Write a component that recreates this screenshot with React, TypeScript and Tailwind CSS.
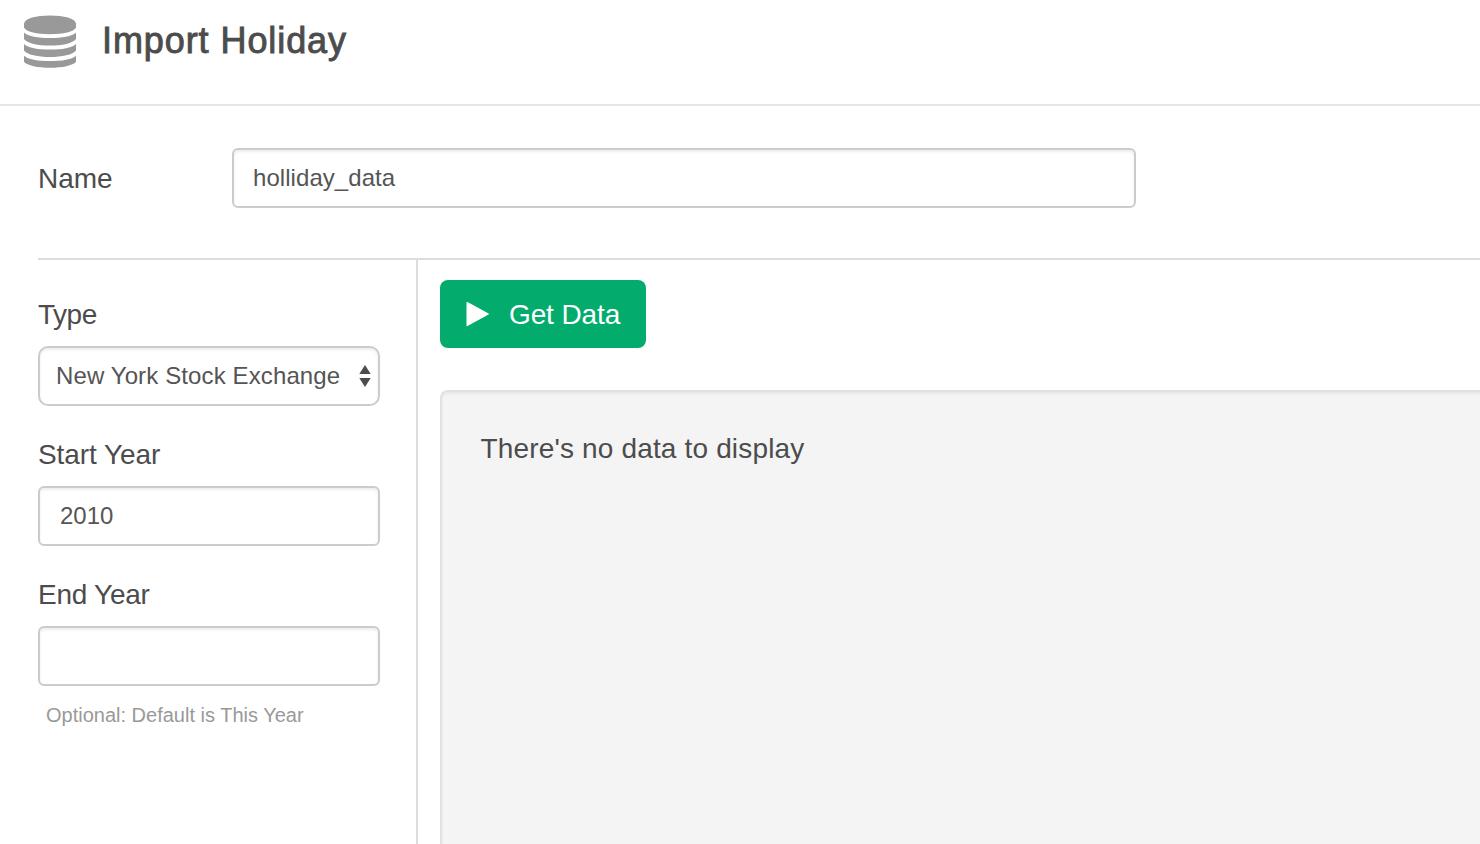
import { useState } from "react";
import type { ReactNode } from "react";

const inputClass =
  "block h-[60px] w-full rounded-[6px] border-2 border-[#cccccc] bg-white text-[24px] text-[#555555] shadow-[inset_0_2px_3px_rgba(0,0,0,0.075)] outline-none";

function DatabaseIcon() {
  return (
    <svg width="54" height="54" viewBox="0 0 54 54" fill="#999999" aria-hidden="true">
      <path d="M1 9.500C2 4.200 13 1.400 27 1.400s25 2.800 26 8.100v4C51 18 40 20.200 27 20.200S3 18 1 13.500z" />
      <path d="M1 18.500C5 22.500 15 24 27 24s22-1.500 26-5.500v6.500C50 29.300 39 31.600 27 31.600S4 29.300 1 25z" />
      <path d="M1 30C5 34 15 35.600 27 35.600s22-1.600 26-5.600v6.500C50 40.800 39 43 27 43S4 40.800 1 36.500z" />
      <path d="M1 41.700C5 45.500 15 47 27 47s22-1.500 26-5.300v6C50 51.600 39 53.700 27 53.700S4 51.600 1 47.700z" />
    </svg>
  );
}

function Field({ label, spacing, children }: { label: string; spacing: string; children: ReactNode }) {
  return (
    <div className="mb-7">
      <label className={`mb-[11px] block h-10 text-[28px] leading-10 whitespace-nowrap ${spacing}`}>{label}</label>
      {children}
    </div>
  );
}

export default function App() {
  const [name, setName] = useState("holliday_data");
  const [startYear, setStartYear] = useState("2010");
  const [endYear, setEndYear] = useState("");

  return (
    <div className="flex h-[844px] w-full flex-col overflow-hidden bg-white font-['Liberation_Sans',Arial,sans-serif] text-[#4c4c4c]">
      <header className="flex h-[106px] shrink-0 items-start border-b-2 border-[#e5e5e5] pt-[14px] pl-[23px]">
        <DatabaseIcon />
        <h1 className="mt-[3px] ml-[25px] text-[36px] leading-[48px] tracking-[0.92px] whitespace-nowrap [-webkit-text-stroke:0.9px_#4c4c4c]">
          Import Holiday
        </h1>
      </header>

      <main className="flex min-h-0 flex-1 flex-col pl-[38px]">
        <section className="flex h-[154px] shrink-0 items-start border-b-2 border-[#dddddd] pt-[42px]">
          <label className="mt-[11px] w-[194px] text-[28px] leading-10">Name</label>
          <div className="w-[904px]">
            <input
              className={`${inputClass} pl-[19px] tracking-[0.06px]`}
              value={name}
              onChange={(e) => setName(e.target.value)}
            />
          </div>
        </section>

        <div className="flex min-h-0 flex-1">
          <aside className="w-[380px] shrink-0 border-r-2 border-[#dddddd] pt-[35px] pr-9">
            <Field label="Type" spacing="tracking-[-0.5px]">
              <button className="flex h-[60px] w-full items-center rounded-[10px] border-2 border-[#cccccc] bg-white pl-4 text-left text-[24px] leading-[56px] whitespace-nowrap text-[#555555] shadow-[inset_0_2px_3px_rgba(0,0,0,0.075)]">
                <span className="w-[302.500px] shrink-0 tracking-[0.12px]">New York Stock Exchange</span>
                <svg width="12" height="24" viewBox="0 0 12 24" fill="#4c4c4c" aria-hidden="true">
                  <path d="M6 1l5.700 9H.3zM.3 14h11.400L6 23z" />
                </svg>
              </button>
            </Field>
            <div className="mt-[29px]">
              <Field label="Start Year" spacing="tracking-[-0.08px]">
                <input
                  className={`${inputClass} pl-5`}
                  value={startYear}
                  onChange={(e) => setStartYear(e.target.value)}
                />
              </Field>
            </div>
            <div className="mt-[29px]">
              <Field label="End Year" spacing="tracking-[-0.25px]">
                <input
                  className={`${inputClass} pl-5`}
                  value={endYear}
                  onChange={(e) => setEndYear(e.target.value)}
                />
                <p className="mt-[14px] pl-2 text-[20px] leading-[30px] whitespace-nowrap text-[#999999]">
                  Optional: Default is This Year
                </p>
              </Field>
            </div>
          </aside>

          <section className="flex min-w-0 flex-1 flex-col items-start pt-5 pl-[22px]">
            <button className="flex h-[68px] w-[206px] shrink-0 items-center rounded-[8px] bg-[#03ac6d] pl-[26px] text-[28px] whitespace-nowrap text-white">
              <svg width="24" height="26" viewBox="0 0 24 26" fill="currentColor" aria-hidden="true">
                <path d="M.5 1.600Q.5.500 1.500 1.100L22.600 12.400Q23.400 13 22.600 13.500L1.500 25Q.5 25.500.5 24.500z" />
              </svg>
              <span className="ml-[19px] pt-[2px] leading-[66px] tracking-[-0.12px]">Get Data</span>
            </button>
            <div className="mt-[42px] min-h-0 w-[1060px] flex-1 rounded-tl-[8px] border-t-2 border-l-2 border-[#e1e1e1] bg-[#f4f4f4] pt-[37px] pl-[38.500px] shadow-[inset_0_2px_3px_rgba(0,0,0,0.05)]">
              <p className="text-[28px] leading-10 tracking-[0.16px] whitespace-nowrap">There's no data to display</p>
            </div>
          </section>
        </div>
      </main>
    </div>
  );
}
